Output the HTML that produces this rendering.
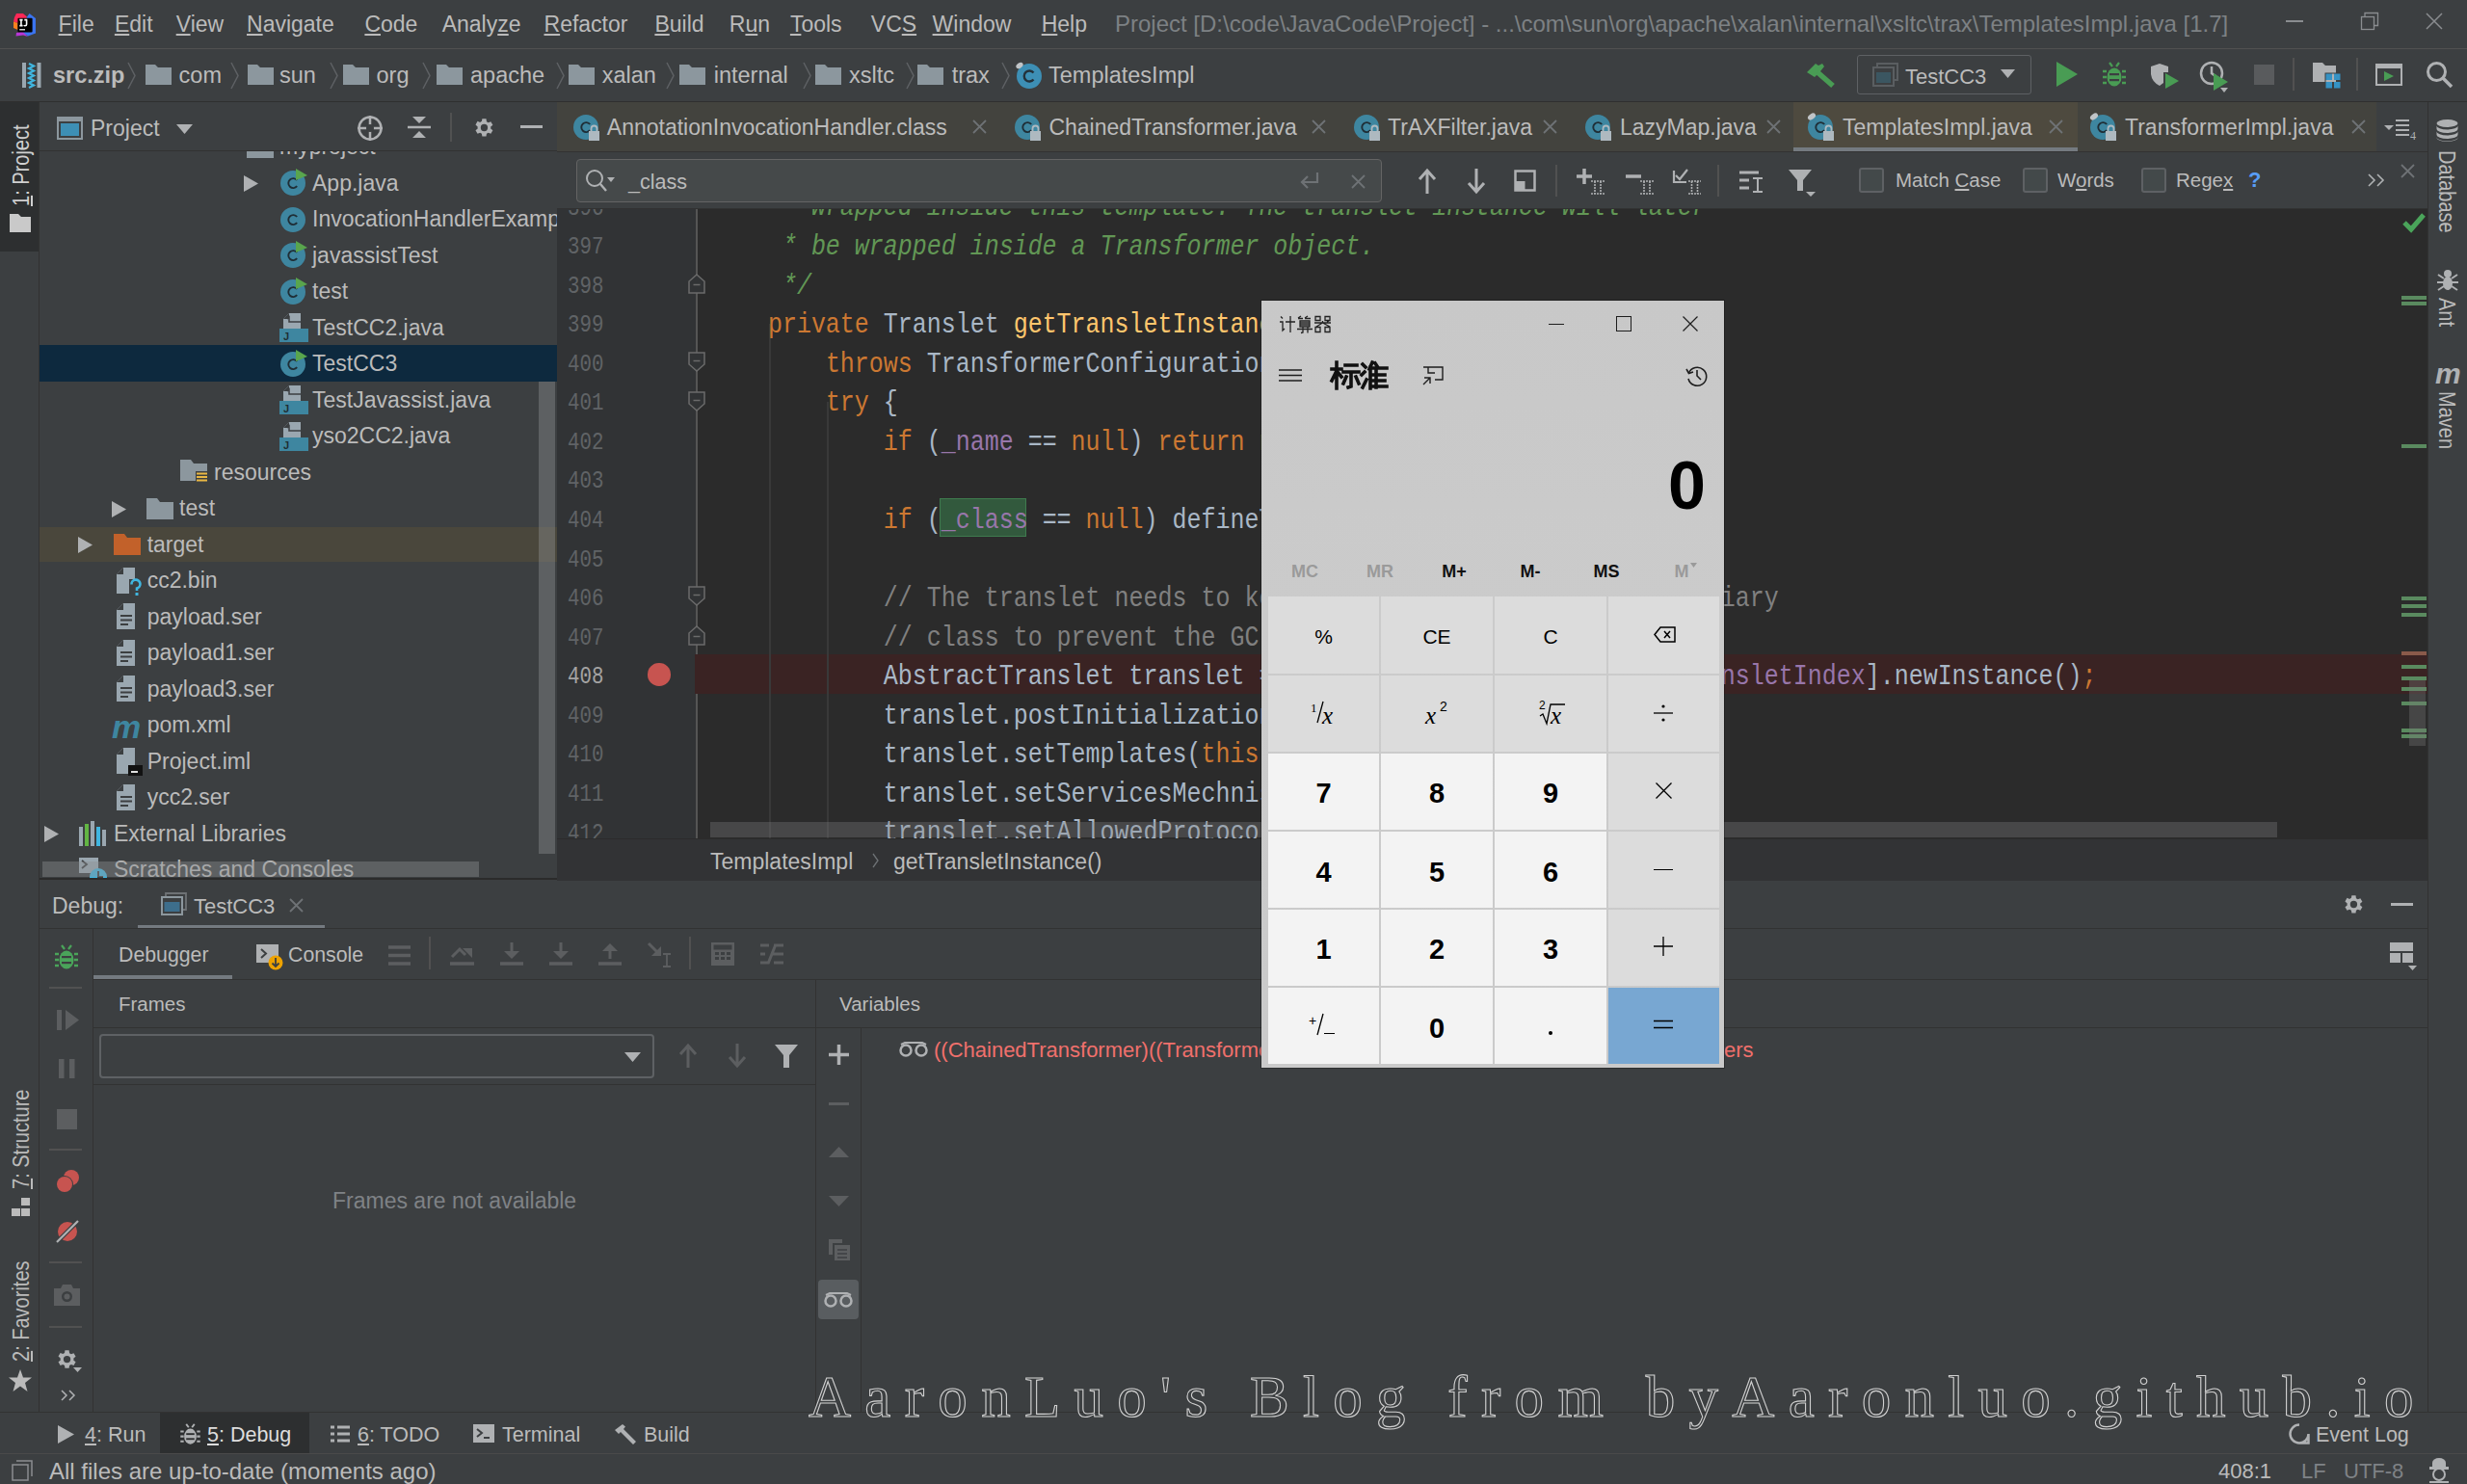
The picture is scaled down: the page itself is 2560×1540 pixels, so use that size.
<!DOCTYPE html>
<html><head><meta charset="utf-8">
<style>
*{margin:0;padding:0;box-sizing:border-box}
html,body{width:2560px;height:1540px;overflow:hidden;background:#3c3f41}
body{position:relative;font-family:"Liberation Sans",sans-serif;font-size:24px;color:#bbbbbb}
.a{position:absolute}
.t{position:absolute;white-space:pre;line-height:1}
.mono{font-family:"Liberation Mono",monospace}
svg{position:absolute;overflow:visible}
</style></head><body>

<!-- ===== MENU BAR ===== -->
<div class="a" style="left:0;top:0;width:2560px;height:50px;background:#3c3f41"></div>
<div class="a" style="left:0;top:50px;width:2560px;height:1px;background:#515151"></div>


<!-- IJ logo -->
<svg style="left:8px;top:8px" width="40" height="36" viewBox="0 0 40 36">
<polygon points="9,6 16,6 20,9.5 18,18 6,14.5 7,10" fill="#fe2857"/>
<polygon points="20,9.5 22.5,6 29,11 29,26.5 21,29.5 15.5,26" fill="#3b74f0"/>
<polygon points="6,14.5 10.5,16 10.5,23 6,21" fill="#fc801d"/>
<polygon points="9,26 15,24.5 21,30 16,28.5 8.5,29.5" fill="#b736d6"/>
<rect x="10.4" y="10.7" width="15.2" height="14.8" rx="1" fill="#000"/>
<path d="M12.3 12.6H15.6M13.95 12.6V18.6M12.3 18.6H15.6M17.3 12.6H20.3M19.6 12.6V17.2Q19.6 18.8 18 18.8Q17.2 18.8 16.8 18.1" stroke="#fff" stroke-width="1.6" fill="none"/>
<rect x="12.2" y="22" width="5.8" height="1.5" fill="#d0d0d0"/>
</svg>
<div class="t" style="left:60.6px;top:14.0px;color:#bbbbbb;font-size:23px"><u>F</u>ile</div>
<div class="t" style="left:118.9px;top:14.0px;color:#bbbbbb;font-size:23px"><u>E</u>dit</div>
<div class="t" style="left:182.7px;top:14.0px;color:#bbbbbb;font-size:23px"><u>V</u>iew</div>
<div class="t" style="left:256.0px;top:14.0px;color:#bbbbbb;font-size:23px"><u>N</u>avigate</div>
<div class="t" style="left:378.4px;top:14.0px;color:#bbbbbb;font-size:23px"><u>C</u>ode</div>
<div class="t" style="left:458.7px;top:14.0px;color:#bbbbbb;font-size:23px">Analy<u>z</u>e</div>
<div class="t" style="left:564.5px;top:14.0px;color:#bbbbbb;font-size:23px"><u>R</u>efactor</div>
<div class="t" style="left:679.4px;top:14.0px;color:#bbbbbb;font-size:23px"><u>B</u>uild</div>
<div class="t" style="left:756.8px;top:14.0px;color:#bbbbbb;font-size:23px">R<u>u</u>n</div>
<div class="t" style="left:819.9px;top:14.0px;color:#bbbbbb;font-size:23px"><u>T</u>ools</div>
<div class="t" style="left:903.8px;top:14.0px;color:#bbbbbb;font-size:23px">VC<u>S</u></div>
<div class="t" style="left:967.6px;top:14.0px;color:#bbbbbb;font-size:23px"><u>W</u>indow</div>
<div class="t" style="left:1080.7px;top:14.0px;color:#bbbbbb;font-size:23px"><u>H</u>elp</div>
<div class="t" style="left:1157px;top:13.2px;color:#7d8184;font-size:24px">Project [D:\code\JavaCode\Project] - ...\com\sun\org\apache\xalan\internal\xsltc\trax\TemplatesImpl.java [1.7]</div>
<div class="a" style="left:2372px;top:21px;width:18px;height:1.5px;background:#8a8d90"></div>
<svg style="left:2450px;top:13px" width="20" height="18"><rect x="0.5" y="4.5" width="13" height="13" fill="none" stroke="#8a8d90" stroke-width="1.3"/><path d="M4 4.5V0.5H17.5V13.5H13.5" fill="none" stroke="#8a8d90" stroke-width="1.3"/></svg>
<svg style="left:2517px;top:13px" width="18" height="18"><path d="M1 1L17 17M17 1L1 17" stroke="#8a8d90" stroke-width="1.5"/></svg>

<!-- ===== NAV BAR ===== -->
<div class="a" style="left:0;top:51px;width:2560px;height:54px;background:#3c3f41"></div>
<div class="a" style="left:0;top:105px;width:2560px;height:2px;background:#2f2f2f"></div>


<!-- zip icon -->
<svg style="left:23px;top:65px" width="20" height="26" viewBox="0 0 20 26">
<rect x="0" y="0" width="4" height="26" fill="#9aa7b0"/><rect x="15.5" y="0" width="4" height="26" fill="#9aa7b0"/>
<path d="M7 1L12 3.5L7 6L12 8.5L7 11L12 13.5L7 16L12 18.5L7 21L12 23.5L7 26" stroke="#40b6e0" stroke-width="2.2" fill="none"/>
</svg>
<div class="t" style="left:55px;top:67.4px;font-weight:bold;color:#bbbbbb;font-size:23.5px">src.zip</div>
<svg style="left:132px;top:64px" width="10" height="29"><path d="M1 1L8 14.5L1 28" stroke="#5e6164" stroke-width="1.5" fill="none"/></svg>
<svg style="left:150.7px;top:66.6px" width="27" height="21" viewBox="0 0 27 21"><path d="M0 0H10L13 3H27V21H0Z" fill="#8c979e"/></svg>
<div class="t" style="left:185.6px;top:67.4px;color:#bbbbbb;font-size:23.5px">com</div>
<svg style="left:239px;top:64px" width="10" height="29"><path d="M1 1L8 14.5L1 28" stroke="#5e6164" stroke-width="1.5" fill="none"/></svg>
<svg style="left:257px;top:66.6px" width="27" height="21" viewBox="0 0 27 21"><path d="M0 0H10L13 3H27V21H0Z" fill="#8c979e"/></svg>
<div class="t" style="left:290px;top:67.4px;color:#bbbbbb;font-size:23.5px">sun</div>
<svg style="left:342px;top:64px" width="10" height="29"><path d="M1 1L8 14.5L1 28" stroke="#5e6164" stroke-width="1.5" fill="none"/></svg>
<svg style="left:355.5px;top:66.6px" width="27" height="21" viewBox="0 0 27 21"><path d="M0 0H10L13 3H27V21H0Z" fill="#8c979e"/></svg>
<div class="t" style="left:390.5px;top:67.4px;color:#bbbbbb;font-size:23.5px">org</div>
<svg style="left:438px;top:64px" width="10" height="29"><path d="M1 1L8 14.5L1 28" stroke="#5e6164" stroke-width="1.5" fill="none"/></svg>
<svg style="left:453px;top:66.6px" width="27" height="21" viewBox="0 0 27 21"><path d="M0 0H10L13 3H27V21H0Z" fill="#8c979e"/></svg>
<div class="t" style="left:488px;top:67.4px;color:#bbbbbb;font-size:23.5px">apache</div>
<svg style="left:577px;top:64px" width="10" height="29"><path d="M1 1L8 14.5L1 28" stroke="#5e6164" stroke-width="1.5" fill="none"/></svg>
<svg style="left:590px;top:66.6px" width="27" height="21" viewBox="0 0 27 21"><path d="M0 0H10L13 3H27V21H0Z" fill="#8c979e"/></svg>
<div class="t" style="left:624.7px;top:67.4px;color:#bbbbbb;font-size:23.5px">xalan</div>
<svg style="left:691px;top:64px" width="10" height="29"><path d="M1 1L8 14.5L1 28" stroke="#5e6164" stroke-width="1.5" fill="none"/></svg>
<svg style="left:705px;top:66.6px" width="27" height="21" viewBox="0 0 27 21"><path d="M0 0H10L13 3H27V21H0Z" fill="#8c979e"/></svg>
<div class="t" style="left:740.7px;top:67.4px;color:#bbbbbb;font-size:23.5px">internal</div>
<svg style="left:833px;top:64px" width="10" height="29"><path d="M1 1L8 14.5L1 28" stroke="#5e6164" stroke-width="1.5" fill="none"/></svg>
<svg style="left:846px;top:66.6px" width="27" height="21" viewBox="0 0 27 21"><path d="M0 0H10L13 3H27V21H0Z" fill="#8c979e"/></svg>
<div class="t" style="left:881px;top:67.4px;color:#bbbbbb;font-size:23.5px">xsltc</div>
<svg style="left:940px;top:64px" width="10" height="29"><path d="M1 1L8 14.5L1 28" stroke="#5e6164" stroke-width="1.5" fill="none"/></svg>
<svg style="left:952px;top:66.6px" width="27" height="21" viewBox="0 0 27 21"><path d="M0 0H10L13 3H27V21H0Z" fill="#8c979e"/></svg>
<div class="t" style="left:987.7px;top:67.4px;color:#bbbbbb;font-size:23.5px">trax</div>
<svg style="left:1039px;top:64px" width="10" height="29"><path d="M1 1L8 14.5L1 28" stroke="#5e6164" stroke-width="1.5" fill="none"/></svg>
<svg style="left:1053px;top:64px" width="30" height="30" viewBox="0 0 30 30"><circle cx="15" cy="15" r="13" fill="#3d8fb5"/><path d="M19.5 11.5A5.5 5.5 0 1 0 19.5 18.5" stroke="#24323b" stroke-width="2.4" fill="none"/><ellipse cx="5" cy="4" rx="4" ry="2.6" fill="#c0c4c7" transform="rotate(-35 5 4)"/></svg>
<div class="t" style="left:1088px;top:67.4px;color:#bbbbbb;font-size:23.5px">TemplatesImpl</div>

<svg style="left:1875px;top:65px" width="29" height="27" viewBox="0 0 29 27"><path d="M0 10L9 1L12 3L16 1L18 4L14 9L8 15Z" fill="#499c54"/><path d="M11 10L27 24" stroke="#499c54" stroke-width="5.5"/></svg>
<div class="a" style="left:1927px;top:57px;width:181px;height:41px;border:1.5px solid #5e6164;border-radius:3px"></div>
<svg style="left:1943px;top:65px" width="27" height="25" viewBox="0 0 27 25"><path d="M5 4V1H26V18H22" fill="none" stroke="#5a5e61" stroke-width="2"/><rect x="1" y="5" width="21" height="19" fill="#3c3f41" stroke="#5a5e61" stroke-width="2"/><rect x="4" y="10" width="15" height="11" fill="#3b5661"/></svg>
<div class="t" style="left:1977px;top:68.9px;color:#bbbbbb;font-size:22px">TestCC3</div>
<svg style="left:2076px;top:72px" width="15" height="9"><path d="M0 0H15L7.5 9Z" fill="#afb1b3"/></svg>
<svg style="left:2134px;top:64px" width="22" height="26"><path d="M0 0L22 13L0 26Z" fill="#499c54"/></svg>
<svg style="left:2182px;top:64px" width="24" height="27" viewBox="0 0 24 27"><path d="M7 1L10 5M17 1L14 5" stroke="#499c54" stroke-width="2.2"/><ellipse cx="12" cy="16" rx="7.5" ry="9.5" fill="#499c54"/><path d="M0 10H4M20 10H24M0 16H4M20 16H24M0 22H4M20 22H24" stroke="#499c54" stroke-width="2.4"/><rect x="7" y="12" width="10" height="2.2" fill="#3c3f41"/><rect x="7" y="18" width="10" height="2.2" fill="#3c3f41"/></svg>
<svg style="left:2231px;top:66px" width="32" height="28" viewBox="0 0 32 28"><path d="M1 3L10 0L19 3V9H14V20L10 23Q2 19 1 11Z" fill="#afb1b3"/><path d="M16 10L30 18L16 26Z" fill="#499c54"/></svg>
<svg style="left:2282px;top:62px" width="30" height="34" viewBox="0 0 30 34"><circle cx="13" cy="14" r="11" fill="none" stroke="#afb1b3" stroke-width="2.5"/><path d="M13 7V14L17 17" stroke="#afb1b3" stroke-width="2.5" fill="none"/><path d="M15 14L30 23L15 32Z" fill="#499c54"/><path d="M22 29H30L26 34Z" fill="#afb1b3"/></svg>
<div class="a" style="left:2339px;top:67px;width:21px;height:21px;background:#595b5d"></div>
<div class="a" style="left:2379px;top:60px;width:2px;height:34px;background:#515151"></div>
<svg style="left:2400px;top:63px" width="30" height="30" viewBox="0 0 30 30"><path d="M0 2H10L13 5H24V22H0Z" fill="#afb1b3"/><rect x="13" y="13" width="7" height="7" fill="#3592c4"/><rect x="22" y="13" width="7" height="7" fill="#3592c4"/><rect x="13" y="22" width="7" height="7" fill="#3592c4"/><rect x="22" y="22" width="7" height="7" fill="#3592c4"/><rect x="13" y="13" width="16" height="16" fill="none" stroke="#3c3f41" stroke-width="1"/></svg>
<div class="a" style="left:2445px;top:60px;width:2px;height:34px;background:#515151"></div>
<svg style="left:2465px;top:66px" width="28" height="23" viewBox="0 0 28 23"><rect x="1" y="1" width="26" height="21" fill="none" stroke="#afb1b3" stroke-width="2"/><rect x="1" y="1" width="26" height="4" fill="#afb1b3"/><path d="M9 8L19 13L9 18Z" fill="#499c54"/></svg>
<svg style="left:2517px;top:63px" width="30" height="30" viewBox="0 0 30 30"><circle cx="11.5" cy="11.5" r="9" fill="none" stroke="#afb1b3" stroke-width="3"/><path d="M18 18L27 27" stroke="#afb1b3" stroke-width="3.5"/></svg>

<!-- ===== LEFT STRIP ===== -->
<div class="a" style="left:0;top:106px;width:41px;height:1359px;background:#3c3f41;border-right:1px solid #323232"></div>

<!-- ===== PROJECT PANEL ===== -->
<div class="a" style="left:41px;top:106px;width:537px;height:807px;background:#3c3f41"></div>


<!-- left strip active -->
<div class="a" style="left:0;top:106px;width:40px;height:155px;background:#2d2f30"></div>
<div class="t" style="left:11px;top:214px;transform:rotate(-90deg) scaleX(0.87);transform-origin:0 0;color:#d0d0d0;font-size:23px"><u>1</u>: Project</div>
<svg style="left:10px;top:222px" width="22" height="19" viewBox="0 0 22 19"><path d="M0 0H9L12 3H22V19H0Z" fill="#c9c9c9"/></svg>

<!-- project header -->
<svg style="left:59px;top:121px" width="27" height="24" viewBox="0 0 27 24"><rect x="1" y="1" width="25" height="22" fill="none" stroke="#8c979e" stroke-width="2"/><rect x="1" y="1" width="25" height="4" fill="#8c979e"/><rect x="4" y="7" width="19" height="13" fill="#3d8fb5"/></svg>
<div class="t" style="left:94px;top:122.0px;color:#bbbbbb;font-size:23px">Project</div>
<svg style="left:183px;top:129px" width="17" height="10"><path d="M0 0H17L8.5 10Z" fill="#afb1b3"/></svg>
<svg style="left:370px;top:119px" width="28" height="28" viewBox="0 0 28 28"><circle cx="14" cy="14" r="11.5" fill="none" stroke="#afb1b3" stroke-width="2.5"/><path d="M14 1V27M1 14H27" stroke="#afb1b3" stroke-width="2.5"/><circle cx="14" cy="14" r="4" fill="#3c3f41"/></svg>
<svg style="left:423px;top:120px" width="24" height="24" viewBox="0 0 24 24"><path d="M0 12H24" stroke="#afb1b3" stroke-width="2.5"/><path d="M5 1H19L12 8Z M5 23H19L12 16Z" fill="#afb1b3"/></svg>
<div class="a" style="left:467px;top:117px;width:1.5px;height:30px;background:#515151"></div>
<svg style="left:489px;top:120px" width="25" height="25" viewBox="0 0 24 24"><path fill="#afb1b3" d="M19.4 13a7.5 7.5 0 0 0 0-2l2.1-1.6-2-3.5-2.5 1a7.6 7.6 0 0 0-1.7-1L14.9 3h-4l-.4 2.6a7.6 7.6 0 0 0-1.7 1l-2.5-1-2 3.5L6.4 11a7.5 7.5 0 0 0 0 2l-2.1 1.6 2 3.5 2.5-1a7.6 7.6 0 0 0 1.7 1l.4 2.6h4l.4-2.6a7.6 7.6 0 0 0 1.7-1l2.5 1 2-3.5zM12.9 15.5a3.5 3.5 0 1 1 0-7 3.5 3.5 0 0 1 0 7z"/></svg>
<div class="a" style="left:540px;top:130px;width:23px;height:3px;background:#afb1b3"></div>
<div class="a" style="left:41px;top:156px;width:537px;height:1px;background:#323232"></div>
<div class="a" style="left:41px;top:157px;width:537px;height:756px;overflow:hidden">
<div class="a" style="left:-41px;top:-157px;width:600px;height:1000px">
<div class="a" style="left:41px;top:358px;width:537px;height:38px;background:#0d293e"></div>
<div class="a" style="left:41px;top:547px;width:537px;height:36px;background:#4a473c"></div>
<svg style="left:225px;top:146px" width="16" height="10"><path d="M0 0H16L8 9Z" fill="#afb1b3"/></svg>
<svg style="left:256px;top:141.8px" width="30" height="24" viewBox="0 0 30 24"><path d="M0 0H11L14 4H28V22H0Z" fill="#8c979e"/></svg>
<div class="t" style="left:290px;top:141.4px;color:#bbbbbb;font-size:23px">myproject</div>
<svg style="left:253px;top:182.3px" width="16" height="17"><path d="M0 0L15 8.5L0 17Z" fill="#afb1b3"/></svg>
<svg style="left:290px;top:175.3px" width="30" height="30" viewBox="0 0 30 30"><circle cx="14" cy="15" r="13" fill="#3e86a0"/><path d="M18.2 12A5 5 0 1 0 18.2 18.2" stroke="#1f2e36" stroke-width="1.9" fill="none"/><path d="M17 0L29 7L17 12Z" fill="#59a54d"/></svg>
<div class="t" style="left:324px;top:178.9px;color:#bbbbbb;font-size:23px">App.java</div>
<svg style="left:290px;top:212.8px" width="30" height="30" viewBox="0 0 30 30"><circle cx="14" cy="15" r="13" fill="#3e86a0"/><path d="M18.2 12A5 5 0 1 0 18.2 18.2" stroke="#1f2e36" stroke-width="1.9" fill="none"/></svg>
<div class="t" style="left:324px;top:216.4px;color:#bbbbbb;font-size:23px">InvocationHandlerExample</div>
<svg style="left:290px;top:250.3px" width="30" height="30" viewBox="0 0 30 30"><circle cx="14" cy="15" r="13" fill="#3e86a0"/><path d="M18.2 12A5 5 0 1 0 18.2 18.2" stroke="#1f2e36" stroke-width="1.9" fill="none"/><path d="M17 0L29 7L17 12Z" fill="#59a54d"/></svg>
<div class="t" style="left:324px;top:253.9px;color:#bbbbbb;font-size:23px">javassistTest</div>
<svg style="left:290px;top:287.8px" width="30" height="30" viewBox="0 0 30 30"><circle cx="14" cy="15" r="13" fill="#3e86a0"/><path d="M18.2 12A5 5 0 1 0 18.2 18.2" stroke="#1f2e36" stroke-width="1.9" fill="none"/><path d="M17 0L29 7L17 12Z" fill="#59a54d"/></svg>
<div class="t" style="left:324px;top:291.4px;color:#bbbbbb;font-size:23px">test</div>
<svg style="left:290px;top:325.3px" width="30" height="30" viewBox="0 0 30 30"><path d="M4 18V6L10 0H22V18Z" fill="#9aa7b0"/><path d="M4 6H10V0Z" fill="#3c3f41"/><path d="M8 6L10 4V9H22" stroke="#3c3f41" stroke-width="1.5" fill="none"/><rect x="0" y="16" width="30" height="14" fill="#3e86a0"/><text x="4" y="28" font-family="Liberation Sans" font-weight="bold" font-size="11" fill="#1f2e36">J</text></svg>
<div class="t" style="left:324px;top:328.9px;color:#bbbbbb;font-size:23px">TestCC2.java</div>
<svg style="left:290px;top:362.8px" width="30" height="30" viewBox="0 0 30 30"><circle cx="14" cy="15" r="13" fill="#3e86a0"/><path d="M18.2 12A5 5 0 1 0 18.2 18.2" stroke="#1f2e36" stroke-width="1.9" fill="none"/><path d="M17 0L29 7L17 12Z" fill="#59a54d"/></svg>
<div class="t" style="left:324px;top:366.4px;color:#bbbbbb;font-size:23px">TestCC3</div>
<svg style="left:290px;top:400.3px" width="30" height="30" viewBox="0 0 30 30"><path d="M4 18V6L10 0H22V18Z" fill="#9aa7b0"/><path d="M4 6H10V0Z" fill="#3c3f41"/><path d="M8 6L10 4V9H22" stroke="#3c3f41" stroke-width="1.5" fill="none"/><rect x="0" y="16" width="30" height="14" fill="#3e86a0"/><text x="4" y="28" font-family="Liberation Sans" font-weight="bold" font-size="11" fill="#1f2e36">J</text></svg>
<div class="t" style="left:324px;top:403.9px;color:#bbbbbb;font-size:23px">TestJavassist.java</div>
<svg style="left:290px;top:437.8px" width="30" height="30" viewBox="0 0 30 30"><path d="M4 18V6L10 0H22V18Z" fill="#9aa7b0"/><path d="M4 6H10V0Z" fill="#3c3f41"/><path d="M8 6L10 4V9H22" stroke="#3c3f41" stroke-width="1.5" fill="none"/><rect x="0" y="16" width="30" height="14" fill="#3e86a0"/><text x="4" y="28" font-family="Liberation Sans" font-weight="bold" font-size="11" fill="#1f2e36">J</text></svg>
<div class="t" style="left:324px;top:441.4px;color:#bbbbbb;font-size:23px">yso2CC2.java</div>
<svg style="left:187px;top:477.3px" width="30" height="24" viewBox="0 0 30 24"><path d="M0 0H11L14 4H28V22H0Z" fill="#8c979e"/><rect x="16" y="12" width="13" height="12" fill="#3c3f41"/><path d="M17 14.5H28M17 18H28M17 21.5H28" stroke="#e9b744" stroke-width="2"/></svg>
<div class="t" style="left:222px;top:478.9px;color:#bbbbbb;font-size:23px">resources</div>
<svg style="left:116px;top:519.8px" width="16" height="17"><path d="M0 0L15 8.5L0 17Z" fill="#afb1b3"/></svg>
<svg style="left:152px;top:516.8px" width="30" height="24" viewBox="0 0 30 24"><path d="M0 0H11L14 4H28V22H0Z" fill="#8c979e"/></svg>
<div class="t" style="left:186px;top:516.4px;color:#bbbbbb;font-size:23px">test</div>
<svg style="left:81px;top:557.3px" width="16" height="17"><path d="M0 0L15 8.5L0 17Z" fill="#afb1b3"/></svg>
<svg style="left:118px;top:554.3px" width="30" height="24" viewBox="0 0 30 24"><path d="M0 0H11L14 4H28V22H0Z" fill="#c2612a"/></svg>
<div class="t" style="left:152.7px;top:553.9px;color:#bbbbbb;font-size:23px">target</div>
<svg style="left:119px;top:587.8px" width="30" height="30" viewBox="0 0 30 30"><path d="M2 28V8L9 1H21V28Z" fill="#9aa7b0"/><path d="M2 8H9V1Z" fill="#3c3f41"/><rect x="15" y="13" width="14" height="17" fill="#3c3f41"/><path d="M17.5 18.5A4.5 4.5 0 1 1 23 22.5V25" stroke="#40b6e0" stroke-width="2.6" fill="none"/><rect x="21.5" y="27" width="3" height="3" fill="#40b6e0"/></svg>
<div class="t" style="left:152.7px;top:591.4px;color:#bbbbbb;font-size:23px">cc2.bin</div>
<svg style="left:119px;top:625.3px" width="30" height="30" viewBox="0 0 30 30"><path d="M2 28V8L9 1H21V28Z" fill="#9aa7b0"/><path d="M2 8H9V1Z" fill="#3c3f41"/><path d="M6 14H18M6 18.5H18M6 23H14" stroke="#3c3f41" stroke-width="1.8"/></svg>
<div class="t" style="left:152.7px;top:628.9px;color:#bbbbbb;font-size:23px">payload.ser</div>
<svg style="left:119px;top:662.8px" width="30" height="30" viewBox="0 0 30 30"><path d="M2 28V8L9 1H21V28Z" fill="#9aa7b0"/><path d="M2 8H9V1Z" fill="#3c3f41"/><path d="M6 14H18M6 18.5H18M6 23H14" stroke="#3c3f41" stroke-width="1.8"/></svg>
<div class="t" style="left:152.7px;top:666.4px;color:#bbbbbb;font-size:23px">payload1.ser</div>
<svg style="left:119px;top:700.3px" width="30" height="30" viewBox="0 0 30 30"><path d="M2 28V8L9 1H21V28Z" fill="#9aa7b0"/><path d="M2 8H9V1Z" fill="#3c3f41"/><path d="M6 14H18M6 18.5H18M6 23H14" stroke="#3c3f41" stroke-width="1.8"/></svg>
<div class="t" style="left:152.7px;top:703.9px;color:#bbbbbb;font-size:23px">payload3.ser</div>
<div class="t" style="left:116px;top:736.8px;color:#3e86a0;font-weight:bold;font-style:italic;font-size:34px;font-family:'Liberation Sans';letter-spacing:-1px">m</div>
<div class="t" style="left:152.7px;top:741.4px;color:#bbbbbb;font-size:23px">pom.xml</div>
<svg style="left:119px;top:775.3px" width="30" height="30" viewBox="0 0 30 30"><path d="M2 28V8L9 1H21V28Z" fill="#9aa7b0"/><path d="M2 8H9V1Z" fill="#3c3f41"/><rect x="14" y="19" width="15" height="11" fill="#121212"/><rect x="17" y="25" width="7" height="2" fill="#e0e0e0"/></svg>
<div class="t" style="left:152.7px;top:778.9px;color:#bbbbbb;font-size:23px">Project.iml</div>
<svg style="left:119px;top:812.8px" width="30" height="30" viewBox="0 0 30 30"><path d="M2 28V8L9 1H21V28Z" fill="#9aa7b0"/><path d="M2 8H9V1Z" fill="#3c3f41"/><path d="M6 14H18M6 18.5H18M6 23H14" stroke="#3c3f41" stroke-width="1.8"/></svg>
<div class="t" style="left:152.7px;top:816.4px;color:#bbbbbb;font-size:23px">ycc2.ser</div>
<svg style="left:46px;top:857.3px" width="16" height="17"><path d="M0 0L15 8.5L0 17Z" fill="#afb1b3"/></svg>
<svg style="left:82px;top:852.3px" width="28" height="26" viewBox="0 0 28 26"><rect x="0" y="6" width="4" height="20" fill="#9aa7b0"/><rect x="6" y="3" width="4" height="23" fill="#62b543"/><rect x="12" y="0" width="4" height="26" fill="#9aa7b0"/><rect x="18" y="6" width="4" height="20" fill="#40b6e0"/><rect x="24" y="9" width="4" height="17" fill="#9aa7b0"/></svg>
<div class="t" style="left:118px;top:853.9px;color:#bbbbbb;font-size:23px">External Libraries</div>
<svg style="left:82px;top:889.8px" width="30" height="30" viewBox="0 0 30 30"><rect x="0" y="0" width="20" height="16" fill="#9aa7b0"/><path d="M3 3L8 7L3 11" stroke="#3c3f41" stroke-width="1.8" fill="none"/><circle cx="20" cy="20" r="9" fill="#40b6e0"/><path d="M20 14V20H25" stroke="#3c3f41" stroke-width="2" fill="none"/></svg>
<div class="t" style="left:118px;top:891.4px;color:#bbbbbb;font-size:23px">Scratches and Consoles</div>
</div></div>
<div class="a" style="left:559px;top:396px;width:17px;height:490px;background:rgba(140,142,145,.42)"></div>
<div class="a" style="left:44px;top:894px;width:453px;height:16px;background:rgba(140,142,145,.42)"></div>

<!-- ===== EDITOR ===== -->
<div class="a" style="left:578px;top:106px;width:1941px;height:807px;background:#2b2b2b"></div>


<!-- tab bar -->
<div class="a" style="left:578px;top:106px;width:1888px;height:51px;background:#43433e"></div>
<div class="a" style="left:1861px;top:106px;width:295px;height:51px;background:#4e4a3f"></div>
<div class="a" style="left:2466px;top:106px;width:53px;height:51px;background:#3c3f41"></div>
<div class="a" style="left:1861px;top:153px;width:295px;height:4px;background:#747a80"></div>
<div class="a" style="left:578px;top:157px;width:1941px;height:1px;background:#323232"></div>
<svg style="left:593.7px;top:117px" width="30" height="30" viewBox="0 0 30 30"><circle cx="14" cy="15" r="13" fill="#3e86a0"/><path d="M18.2 12A5 5 0 1 0 18.2 18.2" stroke="#1f2e36" stroke-width="1.9" fill="none"/><rect x="17" y="19" width="11" height="10" fill="#aeb9c0"/><path d="M19.5 20V16.5A3 3 0 0 1 25.5 16.5V20" stroke="#aeb9c0" stroke-width="1.8" fill="none"/></svg>
<div class="t" style="left:629.8px;top:121.2px;color:#bbbbbb;font-size:23px">AnnotationInvocationHandler.class</div>
<svg style="left:1008.7px;top:124px" width="15" height="15"><path d="M1 1L14 14M14 1L1 14" stroke="#6e7275" stroke-width="1.8"/></svg>
<svg style="left:1051.7px;top:117px" width="30" height="30" viewBox="0 0 30 30"><circle cx="14" cy="15" r="13" fill="#3e86a0"/><path d="M18.2 12A5 5 0 1 0 18.2 18.2" stroke="#1f2e36" stroke-width="1.9" fill="none"/><rect x="17" y="19" width="11" height="10" fill="#aeb9c0"/><path d="M19.5 20V16.5A3 3 0 0 1 25.5 16.5V20" stroke="#aeb9c0" stroke-width="1.8" fill="none"/></svg>
<div class="t" style="left:1088.4px;top:121.2px;color:#bbbbbb;font-size:23px">ChainedTransformer.java</div>
<svg style="left:1361px;top:124px" width="15" height="15"><path d="M1 1L14 14M14 1L1 14" stroke="#6e7275" stroke-width="1.8"/></svg>
<svg style="left:1404px;top:117px" width="30" height="30" viewBox="0 0 30 30"><circle cx="14" cy="15" r="13" fill="#3e86a0"/><path d="M18.2 12A5 5 0 1 0 18.2 18.2" stroke="#1f2e36" stroke-width="1.9" fill="none"/><rect x="17" y="19" width="11" height="10" fill="#aeb9c0"/><path d="M19.5 20V16.5A3 3 0 0 1 25.5 16.5V20" stroke="#aeb9c0" stroke-width="1.8" fill="none"/></svg>
<div class="t" style="left:1440px;top:121.2px;color:#bbbbbb;font-size:23px">TrAXFilter.java</div>
<svg style="left:1600.7px;top:124px" width="15" height="15"><path d="M1 1L14 14M14 1L1 14" stroke="#6e7275" stroke-width="1.8"/></svg>
<svg style="left:1644px;top:117px" width="30" height="30" viewBox="0 0 30 30"><circle cx="14" cy="15" r="13" fill="#3e86a0"/><path d="M18.2 12A5 5 0 1 0 18.2 18.2" stroke="#1f2e36" stroke-width="1.9" fill="none"/><rect x="17" y="19" width="11" height="10" fill="#aeb9c0"/><path d="M19.5 20V16.5A3 3 0 0 1 25.5 16.5V20" stroke="#aeb9c0" stroke-width="1.8" fill="none"/></svg>
<div class="t" style="left:1681px;top:121.2px;color:#bbbbbb;font-size:23px">LazyMap.java</div>
<svg style="left:1833px;top:124px" width="15" height="15"><path d="M1 1L14 14M14 1L1 14" stroke="#6e7275" stroke-width="1.8"/></svg>
<svg style="left:1875px;top:117px" width="30" height="30" viewBox="0 0 30 30"><circle cx="14" cy="15" r="13" fill="#3e86a0"/><path d="M18.2 12A5 5 0 1 0 18.2 18.2" stroke="#1f2e36" stroke-width="1.9" fill="none"/><rect x="17" y="19" width="11" height="10" fill="#aeb9c0"/><path d="M19.5 20V16.5A3 3 0 0 1 25.5 16.5V20" stroke="#aeb9c0" stroke-width="1.8" fill="none"/><ellipse cx="5" cy="4" rx="4.5" ry="2.8" fill="#c0c4c7" transform="rotate(-35 5 4)"/></svg>
<div class="t" style="left:1912px;top:121.2px;color:#bbbbbb;font-size:23px">TemplatesImpl.java</div>
<svg style="left:2126px;top:124px" width="15" height="15"><path d="M1 1L14 14M14 1L1 14" stroke="#6e7275" stroke-width="1.8"/></svg>
<svg style="left:2168px;top:117px" width="30" height="30" viewBox="0 0 30 30"><circle cx="14" cy="15" r="13" fill="#3e86a0"/><path d="M18.2 12A5 5 0 1 0 18.2 18.2" stroke="#1f2e36" stroke-width="1.9" fill="none"/><rect x="17" y="19" width="11" height="10" fill="#aeb9c0"/><path d="M19.5 20V16.5A3 3 0 0 1 25.5 16.5V20" stroke="#aeb9c0" stroke-width="1.8" fill="none"/><ellipse cx="5" cy="4" rx="4.5" ry="2.8" fill="#c0c4c7" transform="rotate(-35 5 4)"/></svg>
<div class="t" style="left:2205px;top:121.2px;color:#bbbbbb;font-size:23px">TransformerImpl.java</div>
<svg style="left:2440px;top:124px" width="15" height="15"><path d="M1 1L14 14M14 1L1 14" stroke="#6e7275" stroke-width="1.8"/></svg>
<svg style="left:2474px;top:122px" width="34" height="24" viewBox="0 0 34 24"><path d="M0 8H10L5 13Z" fill="#afb1b3"/><path d="M12 3H26M12 8H26M12 13H26M12 18H26" stroke="#afb1b3" stroke-width="2"/><text x="27" y="23" font-family="Liberation Serif" font-size="12" fill="#afb1b3">4</text></svg>
<!-- search toolbar -->
<div class="a" style="left:578px;top:158px;width:1941px;height:59px;background:#3c3f41"></div>
<div class="a" style="left:578px;top:216px;width:1941px;height:1px;background:#323232"></div>
<div class="a" style="left:598px;top:165px;width:836px;height:45px;border:1.5px solid #646464;border-radius:4px;background:#45494a"></div>
<svg style="left:607px;top:175px" width="32" height="26" viewBox="0 0 32 26"><circle cx="10" cy="10" r="8" fill="none" stroke="#afb1b3" stroke-width="2"/><path d="M16 16L22 23" stroke="#afb1b3" stroke-width="2.4"/><path d="M23 9H31L27 14Z" fill="#afb1b3"/></svg>
<div class="t" style="left:652px;top:178.8px;color:#bbbbbb;font-size:21.5px">_class</div>
<svg style="left:1347px;top:177px" width="26" height="24" viewBox="0 0 26 24"><path d="M20 2V12H5" stroke="#6e7275" stroke-width="2.2" fill="none"/><path d="M10 6L4 12L10 18" stroke="#6e7275" stroke-width="2.2" fill="none"/></svg>
<svg style="left:1402px;top:181px" width="15" height="15"><path d="M1 1L14 14M14 1L1 14" stroke="#6e7275" stroke-width="1.8"/></svg>

<svg style="left:1471px;top:175px" width="20" height="26" viewBox="0 0 20 26"><path d="M10 3V26M2 11L10 2L18 11" stroke="#afb1b3" stroke-width="3" fill="none"/></svg>
<svg style="left:1522px;top:175px" width="20" height="26" viewBox="0 0 20 26"><path d="M10 0V23M2 15L10 24L18 15" stroke="#afb1b3" stroke-width="3" fill="none"/></svg>
<svg style="left:1571px;top:176px" width="23" height="23" viewBox="0 0 23 23"><rect x="1.5" y="1.5" width="20" height="20" fill="none" stroke="#afb1b3" stroke-width="2.5"/><rect x="1.5" y="12" width="10" height="9.5" fill="#afb1b3"/></svg>
<div class="a" style="left:1614px;top:171px;width:1.5px;height:33px;background:#515151"></div>
<svg style="left:1636px;top:174px" width="30" height="30" viewBox="0 0 30 30"><path d="M8 1V17M0 9H16" stroke="#afb1b3" stroke-width="3.5"/><path d="M15 14H29M15 27H29M19 14V27M25 14V27" stroke="#afb1b3" stroke-width="1.6" stroke-dasharray="2 1"/></svg>
<svg style="left:1687px;top:174px" width="30" height="30" viewBox="0 0 30 30"><path d="M0 9H16" stroke="#afb1b3" stroke-width="3.5"/><path d="M15 14H29M15 27H29M19 14V27M25 14V27" stroke="#afb1b3" stroke-width="1.6" stroke-dasharray="2 1"/></svg>
<svg style="left:1736px;top:174px" width="30" height="30" viewBox="0 0 30 30"><path d="M1 3V15H14M3 8L7 12L15 2" stroke="#afb1b3" stroke-width="2.2" fill="none"/><path d="M16 14H29M16 27H29M19.5 14V27M25.5 14V27" stroke="#afb1b3" stroke-width="1.6" stroke-dasharray="2 1"/></svg>
<div class="a" style="left:1782px;top:171px;width:1.5px;height:33px;background:#515151"></div>
<svg style="left:1805px;top:177px" width="26" height="24" viewBox="0 0 26 24"><path d="M0 2H20M0 10H10M0 18H10" stroke="#afb1b3" stroke-width="3"/><path d="M14 8H24M14 22H24M19 8V22" stroke="#afb1b3" stroke-width="2"/></svg>
<svg style="left:1856px;top:176px" width="30" height="30" viewBox="0 0 30 30"><path d="M0 0H24L15 11V22H9V11Z" fill="#afb1b3"/><path d="M18 23H28L23 28Z" fill="#afb1b3"/></svg>
<div class="a" style="left:1929px;top:174px;width:26px;height:26px;border:2px solid #5e6164;border-radius:3px;background:#43494a"></div>
<div class="t" style="left:1967px;top:176.8px;color:#bbbbbb;font-size:20.5px">Match <u>C</u>ase</div>
<div class="a" style="left:2099px;top:174px;width:26px;height:26px;border:2px solid #5e6164;border-radius:3px;background:#43494a"></div>
<div class="t" style="left:2135px;top:176.8px;color:#bbbbbb;font-size:20.5px">W<u>o</u>rds</div>
<div class="a" style="left:2222px;top:174px;width:26px;height:26px;border:2px solid #5e6164;border-radius:3px;background:#43494a"></div>
<div class="t" style="left:2258px;top:176.8px;color:#bbbbbb;font-size:20.5px">Rege<u>x</u></div>
<div class="t" style="left:2333px;top:175.9px;color:#589df6;font-weight:bold;font-size:22px">?</div>
<svg style="left:2457px;top:180px" width="18" height="14"><path d="M1 1L7 7L1 13M10 1L16 7L10 13" stroke="#afb1b3" stroke-width="1.6" fill="none"/></svg>
<svg style="left:2491px;top:170px" width="15" height="15"><path d="M1 1L14 14M14 1L1 14" stroke="#6e7275" stroke-width="1.8"/></svg>

<!-- gutter -->
<div class="a" style="left:578px;top:217px;width:144px;height:655px;background:#313335"></div>
<div class="a" style="left:722px;top:217px;width:1.5px;height:655px;background:#555555"></div>
<div class="a" style="left:798px;top:679px;width:2px;height:0;"></div>
<div class="a" style="left:721px;top:679px;width:1798px;height:41px;background:#3a2323"></div>
<div class="a" style="left:798px;top:336px;width:1.5px;height:536px;background:#393939"></div>
<div class="a" style="left:858px;top:417px;width:1.5px;height:455px;background:#393939"></div>
<div class="a" style="left:975px;top:517px;width:90px;height:40px;background:#32593d;border:1.5px solid #3e7b4e"></div>
<div class="a" style="left:672px;top:688px;width:23.5px;height:23.5px;border-radius:50%;background:#c75450"></div>
<div class="a" style="left:578px;top:217px;width:144px;height:655px;overflow:hidden">
<div class="t mono" style="left:2px;top:-10.5px;width:46.5px;text-align:right;font-size:20.8px;color:#606366;transform:scaleY(1.22);transform-origin:0 8.5px">396</div>
<div class="t mono" style="left:2px;top:30.1px;width:46.5px;text-align:right;font-size:20.8px;color:#606366;transform:scaleY(1.22);transform-origin:0 8.5px">397</div>
<div class="t mono" style="left:2px;top:70.6px;width:46.5px;text-align:right;font-size:20.8px;color:#606366;transform:scaleY(1.22);transform-origin:0 8.5px">398</div>
<div class="t mono" style="left:2px;top:111.2px;width:46.5px;text-align:right;font-size:20.8px;color:#606366;transform:scaleY(1.22);transform-origin:0 8.5px">399</div>
<div class="t mono" style="left:2px;top:151.8px;width:46.5px;text-align:right;font-size:20.8px;color:#606366;transform:scaleY(1.22);transform-origin:0 8.5px">400</div>
<div class="t mono" style="left:2px;top:192.3px;width:46.5px;text-align:right;font-size:20.8px;color:#606366;transform:scaleY(1.22);transform-origin:0 8.5px">401</div>
<div class="t mono" style="left:2px;top:232.9px;width:46.5px;text-align:right;font-size:20.8px;color:#606366;transform:scaleY(1.22);transform-origin:0 8.5px">402</div>
<div class="t mono" style="left:2px;top:273.4px;width:46.5px;text-align:right;font-size:20.8px;color:#606366;transform:scaleY(1.22);transform-origin:0 8.5px">403</div>
<div class="t mono" style="left:2px;top:314.0px;width:46.5px;text-align:right;font-size:20.8px;color:#606366;transform:scaleY(1.22);transform-origin:0 8.5px">404</div>
<div class="t mono" style="left:2px;top:354.6px;width:46.5px;text-align:right;font-size:20.8px;color:#606366;transform:scaleY(1.22);transform-origin:0 8.5px">405</div>
<div class="t mono" style="left:2px;top:395.1px;width:46.5px;text-align:right;font-size:20.8px;color:#606366;transform:scaleY(1.22);transform-origin:0 8.5px">406</div>
<div class="t mono" style="left:2px;top:435.7px;width:46.5px;text-align:right;font-size:20.8px;color:#606366;transform:scaleY(1.22);transform-origin:0 8.5px">407</div>
<div class="t mono" style="left:2px;top:476.2px;width:46.5px;text-align:right;font-size:20.8px;color:#a4a3a3;transform:scaleY(1.22);transform-origin:0 8.5px">408</div>
<div class="t mono" style="left:2px;top:516.8px;width:46.5px;text-align:right;font-size:20.8px;color:#606366;transform:scaleY(1.22);transform-origin:0 8.5px">409</div>
<div class="t mono" style="left:2px;top:557.4px;width:46.5px;text-align:right;font-size:20.8px;color:#606366;transform:scaleY(1.22);transform-origin:0 8.5px">410</div>
<div class="t mono" style="left:2px;top:597.9px;width:46.5px;text-align:right;font-size:20.8px;color:#606366;transform:scaleY(1.22);transform-origin:0 8.5px">411</div>
<div class="t mono" style="left:2px;top:638.5px;width:46.5px;text-align:right;font-size:20.8px;color:#606366;transform:scaleY(1.22);transform-origin:0 8.5px">412</div>
</div>
<svg style="left:714px;top:283.9px" width="18" height="21"><path d="M1 20V8L9 1L17 8V20Z" fill="#313335" stroke="#6b6b6b" stroke-width="1.5"/><path d="M5.5 11.5H12.5" stroke="#6b6b6b" stroke-width="1.5"/></svg>
<svg style="left:714px;top:365.0px" width="18" height="21"><path d="M1 1H17V13L9 20L1 13Z" fill="#313335" stroke="#6b6b6b" stroke-width="1.5"/><path d="M5.5 9.5H12.5" stroke="#6b6b6b" stroke-width="1.5"/></svg>
<svg style="left:714px;top:405.6px" width="18" height="21"><path d="M1 1H17V13L9 20L1 13Z" fill="#313335" stroke="#6b6b6b" stroke-width="1.5"/><path d="M5.5 9.5H12.5" stroke="#6b6b6b" stroke-width="1.5"/></svg>
<svg style="left:714px;top:608.4px" width="18" height="21"><path d="M1 1H17V13L9 20L1 13Z" fill="#313335" stroke="#6b6b6b" stroke-width="1.5"/><path d="M5.5 9.5H12.5" stroke="#6b6b6b" stroke-width="1.5"/></svg>
<svg style="left:714px;top:648.9px" width="18" height="21"><path d="M1 20V8L9 1L17 8V20Z" fill="#313335" stroke="#6b6b6b" stroke-width="1.5"/><path d="M5.5 11.5H12.5" stroke="#6b6b6b" stroke-width="1.5"/></svg>
<div class="a" style="left:723px;top:217px;width:1796px;height:655px;overflow:hidden"><div class="a" style="left:-723px;top:-217px;width:2600px;height:1000px">
<div class="t mono" style="left:737px;top:203.4px;font-size:24.98px;transform:scaleY(1.15);transform-origin:0 10.87px"><span style="color:#629755;font-style:italic">     * wrapped inside this template. The translet instance will later</span></div>
<div class="t mono" style="left:737px;top:243.9px;font-size:24.98px;transform:scaleY(1.15);transform-origin:0 10.87px"><span style="color:#629755;font-style:italic">     * be wrapped inside a Transformer object.</span></div>
<div class="t mono" style="left:737px;top:284.5px;font-size:24.98px;transform:scaleY(1.15);transform-origin:0 10.87px"><span style="color:#629755;font-style:italic">     */</span></div>
<div class="t mono" style="left:737px;top:325.1px;font-size:24.98px;transform:scaleY(1.15);transform-origin:0 10.87px"><span style="color:#a9b7c6">    </span><span style="color:#cc7832">private </span><span style="color:#a9b7c6">Translet </span><span style="color:#ffc66d">getTransletInstance</span><span style="color:#a9b7c6">()</span></div>
<div class="t mono" style="left:737px;top:365.6px;font-size:24.98px;transform:scaleY(1.15);transform-origin:0 10.87px"><span style="color:#a9b7c6">        </span><span style="color:#cc7832">throws </span><span style="color:#a9b7c6">TransformerConfigurationException {</span></div>
<div class="t mono" style="left:737px;top:406.2px;font-size:24.98px;transform:scaleY(1.15);transform-origin:0 10.87px"><span style="color:#a9b7c6">        </span><span style="color:#cc7832">try </span><span style="color:#a9b7c6">{</span></div>
<div class="t mono" style="left:737px;top:446.7px;font-size:24.98px;transform:scaleY(1.15);transform-origin:0 10.87px"><span style="color:#a9b7c6">            </span><span style="color:#cc7832">if </span><span style="color:#a9b7c6">(</span><span style="color:#9876aa">_name</span><span style="color:#a9b7c6"> == </span><span style="color:#cc7832">null</span><span style="color:#a9b7c6">) </span><span style="color:#cc7832">return null</span><span style="color:#cc7832">;</span></div>
<div class="t mono" style="left:737px;top:527.9px;font-size:24.98px;transform:scaleY(1.15);transform-origin:0 10.87px"><span style="color:#a9b7c6">            </span><span style="color:#cc7832">if </span><span style="color:#a9b7c6">(</span><span style="color:#9876aa">_class</span><span style="color:#a9b7c6"> == </span><span style="color:#cc7832">null</span><span style="color:#a9b7c6">) defineTransletClasses()</span><span style="color:#cc7832">;</span></div>
<div class="t mono" style="left:737px;top:609.0px;font-size:24.98px;transform:scaleY(1.15);transform-origin:0 10.87px"><span style="color:#808080">            // The translet needs to keep a reference to all its auxiliary</span></div>
<div class="t mono" style="left:737px;top:649.5px;font-size:24.98px;transform:scaleY(1.15);transform-origin:0 10.87px"><span style="color:#808080">            // class to prevent the GC from collecting them</span></div>
<div class="t mono" style="left:737px;top:690.1px;font-size:24.98px;transform:scaleY(1.15);transform-origin:0 10.87px"><span style="color:#a9b7c6">            AbstractTranslet translet = (AbstractTranslet) </span><span style="color:#9876aa">_class</span><span style="color:#a9b7c6">[</span><span style="color:#9876aa">_transletIndex</span><span style="color:#a9b7c6">].newInstance()</span><span style="color:#cc7832">;</span></div>
<div class="t mono" style="left:737px;top:730.7px;font-size:24.98px;transform:scaleY(1.15);transform-origin:0 10.87px"><span style="color:#a9b7c6">            translet.postInitialization()</span><span style="color:#cc7832">;</span></div>
<div class="t mono" style="left:737px;top:771.2px;font-size:24.98px;transform:scaleY(1.15);transform-origin:0 10.87px"><span style="color:#a9b7c6">            translet.setTemplates(</span><span style="color:#cc7832">this</span><span style="color:#a9b7c6">)</span><span style="color:#cc7832">;</span></div>
<div class="t mono" style="left:737px;top:811.8px;font-size:24.98px;transform:scaleY(1.15);transform-origin:0 10.87px"><span style="color:#a9b7c6">            translet.setServicesMechnism(</span><span style="color:#9876aa">_useServicesMechanism</span><span style="color:#a9b7c6">)</span><span style="color:#cc7832">;</span></div>
<div class="t mono" style="left:737px;top:852.3px;font-size:24.98px;transform:scaleY(1.15);transform-origin:0 10.87px"><span style="color:#a9b7c6">            translet.setAllowedProtocols(</span><span style="color:#9876aa">_accessExternalStylesheet</span><span style="color:#a9b7c6">)</span><span style="color:#cc7832">;</span></div>
</div></div>
<div class="a" style="left:737px;top:853px;width:1626px;height:16px;background:rgba(130,132,135,.32)"></div>
<svg style="left:2493px;top:221px" width="24" height="20" viewBox="0 0 24 20"><path d="M2 10L9 17L22 2" stroke="#4aa45a" stroke-width="5" fill="none"/></svg>
<div class="a" style="left:2492px;top:307px;width:26px;height:4px;background:#5a8a5f"></div>
<div class="a" style="left:2492px;top:313px;width:26px;height:4px;background:#5a8a5f"></div>
<div class="a" style="left:2492px;top:461px;width:26px;height:4px;background:#5a8a5f"></div>
<div class="a" style="left:2492px;top:619px;width:26px;height:4px;background:#5a8a5f"></div>
<div class="a" style="left:2492px;top:627px;width:26px;height:4px;background:#5a8a5f"></div>
<div class="a" style="left:2492px;top:636px;width:26px;height:4px;background:#5a8a5f"></div>
<div class="a" style="left:2492px;top:676px;width:26px;height:4px;background:#8a5a4a"></div>
<div class="a" style="left:2492px;top:690px;width:26px;height:4px;background:#5a8a5f"></div>
<div class="a" style="left:2492px;top:702px;width:26px;height:4px;background:#5a8a5f"></div>
<div class="a" style="left:2492px;top:713px;width:26px;height:4px;background:#5a8a5f"></div>
<div class="a" style="left:2492px;top:728px;width:26px;height:4px;background:#5a8a5f"></div>
<div class="a" style="left:2492px;top:756px;width:26px;height:4px;background:#5a8a5f"></div>
<div class="a" style="left:2492px;top:762px;width:26px;height:4px;background:#5a8a5f"></div>
<div class="a" style="left:2500px;top:706px;width:17px;height:68px;background:rgba(120,120,120,.35)"></div>
<div class="a" style="left:578px;top:870px;width:1941px;height:44px;background:#323335;border-top:1.5px solid #2b2b2b"></div>
<div class="t" style="left:737px;top:882.5px;color:#bbbbbb;font-size:23px">TemplatesImpl</div>
<svg style="left:905px;top:885px" width="8" height="16"><path d="M1 1L6 8L1 15" stroke="#6e7275" stroke-width="1.3" fill="none"/></svg>
<div class="t" style="left:927px;top:882.5px;color:#bbbbbb;font-size:23px">getTransletInstance()</div>

<!-- ===== RIGHT STRIP ===== -->
<div class="a" style="left:2519px;top:106px;width:41px;height:1359px;background:#3c3f41;border-left:1px solid #323232"></div>


<!-- right strip content -->
<svg style="left:2528px;top:124px" width="23" height="23" viewBox="0 0 23 23"><ellipse cx="11.5" cy="4" rx="11" ry="4" fill="#afb1b3"/><path d="M0.5 6.5A11 4 0 0 0 22.5 6.5V10A11 4 0 0 1 0.5 10Z M0.5 12.5A11 4 0 0 0 22.5 12.5V16A11 4 0 0 1 0.5 16Z M0.5 18.5A11 4 0 0 0 22.5 18.5V19A11 4 0 0 1 0.5 19Z" fill="#afb1b3"/></svg>
<div class="t" style="left:2550px;top:156px;transform:rotate(90deg) scaleX(0.87);transform-origin:0 0;color:#bbbbbb;font-size:23px">Database</div>
<svg style="left:2529px;top:279px" width="22" height="23" viewBox="0 0 22 23"><ellipse cx="11" cy="5" rx="4" ry="4" fill="#afb1b3"/><ellipse cx="11" cy="15" rx="5" ry="7" fill="#afb1b3"/><path d="M1 6L7 10M21 6L15 10M0 14H22M1 22L7 18M21 22L15 18" stroke="#afb1b3" stroke-width="2"/></svg>
<div class="t" style="left:2550px;top:309px;transform:rotate(90deg) scaleX(0.87);transform-origin:0 0;color:#bbbbbb;font-size:23px">Ant</div>
<div class="t" style="left:2527px;top:373px;color:#afb1b3;font-weight:bold;font-style:italic;font-size:30px;font-family:'Liberation Sans'">m</div>
<div class="t" style="left:2550px;top:406px;transform:rotate(90deg) scaleX(0.87);transform-origin:0 0;color:#bbbbbb;font-size:23px">Maven</div>

<!-- ===== DEBUG PANEL ===== -->
<div class="a" style="left:41px;top:914px;width:2478px;height:551px;background:#3c3f41"></div>


<div class="a" style="left:41px;top:911px;width:537px;height:2px;background:#2b2b2b"></div>
<!-- debug header -->
<div class="t" style="left:54px;top:928.8px;color:#bbbbbb;font-size:23px">Debug:</div>
<svg style="left:167px;top:926px" width="27" height="24" viewBox="0 0 27 24"><path d="M5 5V1H26V18H22" fill="none" stroke="#6e7275" stroke-width="1.8"/><rect x="1" y="5" width="21" height="18" fill="none" stroke="#8c979e" stroke-width="2"/><rect x="3.5" y="10" width="16" height="10" fill="#3d6e8c"/></svg>
<div class="t" style="left:201px;top:929.7px;color:#bbbbbb;font-size:22px">TestCC3</div>
<svg style="left:300px;top:932px" width="15" height="15"><path d="M1 1L14 14M14 1L1 14" stroke="#6e7275" stroke-width="1.8"/></svg>
<div class="a" style="left:143px;top:960px;width:194px;height:4px;background:#747a80"></div>
<div class="a" style="left:41px;top:963px;width:2478px;height:1px;background:#323232"></div>
<svg style="left:2429px;top:926px" width="25" height="25" viewBox="0 0 24 24"><path fill="#afb1b3" d="M19.4 13a7.5 7.5 0 0 0 0-2l2.1-1.6-2-3.5-2.5 1a7.6 7.6 0 0 0-1.7-1L14.9 3h-4l-.4 2.6a7.6 7.6 0 0 0-1.7 1l-2.5-1-2 3.5L6.4 11a7.5 7.5 0 0 0 0 2l-2.1 1.6 2 3.5 2.5-1a7.6 7.6 0 0 0 1.7 1l.4 2.6h4l.4-2.6a7.6 7.6 0 0 0 1.7-1l2.5 1 2-3.5zM12.9 15.5a3.5 3.5 0 1 1 0-7 3.5 3.5 0 0 1 0 7z"/></svg>
<div class="a" style="left:2481px;top:937px;width:23px;height:3px;background:#afb1b3"></div>
<svg style="left:2480px;top:978px" width="28" height="30" viewBox="0 0 28 30"><rect x="0" y="0" width="24" height="9" fill="#afb1b3"/><rect x="0" y="11" width="11" height="10" fill="#afb1b3"/><rect x="13" y="11" width="11" height="10" fill="#afb1b3"/><path d="M19 24H28L23.5 29Z" fill="#afb1b3"/></svg>

<!-- left debug column -->
<div class="a" style="left:96px;top:964px;width:1px;height:501px;background:#323232"></div>
<svg style="left:57px;top:980px" width="24" height="27" viewBox="0 0 24 27"><path d="M7 1L10 5M17 1L14 5" stroke="#4aa45a" stroke-width="2.2"/><ellipse cx="12" cy="16" rx="7.5" ry="9.5" fill="#4aa45a"/><path d="M0 10H4M20 10H24M0 16H4M20 16H24M0 22H4M20 22H24" stroke="#4aa45a" stroke-width="2.4"/><rect x="7" y="12" width="10" height="2.2" fill="#3c3f41"/><rect x="7" y="18" width="10" height="2.2" fill="#3c3f41"/></svg>
<div class="a" style="left:51px;top:1024px;width:34px;height:2px;background:#515151"></div>
<svg style="left:59px;top:1048px" width="23" height="21"><rect x="0" y="0" width="5" height="21" fill="#5c5e60"/><path d="M9 0L23 10.5L9 21Z" fill="#5c5e60"/></svg>
<svg style="left:61px;top:1099px" width="17" height="20"><rect x="0" y="0" width="5.5" height="20" fill="#5c5e60"/><rect x="11" y="0" width="5.5" height="20" fill="#5c5e60"/></svg>
<div class="a" style="left:59px;top:1151px;width:21px;height:21px;background:#5c5e60"></div>
<div class="a" style="left:51px;top:1192px;width:34px;height:2px;background:#515151"></div>
<svg style="left:57px;top:1213px" width="26" height="26" viewBox="0 0 26 26"><circle cx="17" cy="9" r="8" fill="#c75450"/><circle cx="10" cy="16" r="9" fill="#3c3f41"/><circle cx="10" cy="16" r="8" fill="#c75450"/></svg>
<svg style="left:57px;top:1265px" width="26" height="26" viewBox="0 0 26 26"><circle cx="13" cy="13" r="10" fill="#c75450"/><path d="M2 24L24 2" stroke="#3c3f41" stroke-width="4.5"/><path d="M2 24L24 2" stroke="#afb1b3" stroke-width="2.2"/></svg>
<div class="a" style="left:51px;top:1309px;width:34px;height:2px;background:#515151"></div>
<svg style="left:56px;top:1333px" width="27" height="22" viewBox="0 0 27 22"><path d="M0 4H7L9 0H18L20 4H27V22H0Z" fill="#5c5e60"/><circle cx="13.5" cy="12.5" r="5.5" fill="#3c3f41"/><circle cx="13.5" cy="12.5" r="3" fill="#5c5e60"/></svg>
<div class="a" style="left:51px;top:1376px;width:34px;height:2px;background:#515151"></div>
<svg style="left:56px;top:1398px" width="30" height="30" viewBox="0 0 30 30"><g transform="scale(1.05)"><path fill="#afb1b3" d="M19.4 13a7.5 7.5 0 0 0 0-2l2.1-1.6-2-3.5-2.5 1a7.6 7.6 0 0 0-1.7-1L14.9 3h-4l-.4 2.6a7.6 7.6 0 0 0-1.7 1l-2.5-1-2 3.5L6.4 11a7.5 7.5 0 0 0 0 2l-2.1 1.6 2 3.5 2.5-1a7.6 7.6 0 0 0 1.7 1l.4 2.6h4l.4-2.6a7.6 7.6 0 0 0 1.7-1l2.5 1 2-3.5zM12.9 15.5a3.5 3.5 0 1 1 0-7 3.5 3.5 0 0 1 0 7z"/></g><path d="M20 21H29L24.5 26Z" fill="#afb1b3"/></svg>
<svg style="left:63px;top:1442px" width="16" height="12"><path d="M1 1L6 6L1 11M9 1L14 6L9 11" stroke="#afb1b3" stroke-width="1.5" fill="none"/></svg>

<!-- debugger/console tabs row -->
<div class="t" style="left:123px;top:980.5px;color:#bbbbbb;font-size:21.3px">Debugger</div>
<div class="a" style="left:97px;top:1012px;width:144px;height:5px;background:#747a80"></div>
<svg style="left:266px;top:980px" width="29" height="27" viewBox="0 0 29 27"><rect x="0" y="0" width="23" height="19" fill="#afb1b3"/><path d="M5 5L10 9.5L5 14" stroke="#3c3f41" stroke-width="2" fill="none"/><circle cx="20" cy="19" r="7.5" fill="#eda200"/><path d="M20 14V23M16.5 19.5L20 23L23.5 19.5" stroke="#3c3f41" stroke-width="1.8" fill="none"/></svg>
<div class="t" style="left:299px;top:980.5px;color:#bbbbbb;font-size:21.3px">Console</div>
<svg style="left:403px;top:981px" width="23" height="21"><path d="M0 2H23M0 10.5H23M0 19H23" stroke="#5c5e60" stroke-width="3.5"/></svg>
<div class="a" style="left:445px;top:972px;width:2px;height:34px;background:#515151"></div>
<svg style="left:467px;top:978px" width="25" height="24" viewBox="0 0 25 24"><path d="M0 22H25" stroke="#5c5e60" stroke-width="3.5"/><path d="M2 15L10 7L16 13" stroke="#5c5e60" stroke-width="3" fill="none"/><path d="M13 6H23V16Z" fill="#5c5e60"/></svg>
<svg style="left:519px;top:978px" width="24" height="24" viewBox="0 0 24 24"><path d="M0 22H24" stroke="#5c5e60" stroke-width="3.5"/><path d="M12 0V12" stroke="#5c5e60" stroke-width="3"/><path d="M4 9H20L12 17Z" fill="#5c5e60"/></svg>
<svg style="left:570px;top:978px" width="24" height="24" viewBox="0 0 24 24"><path d="M0 22H24" stroke="#5c5e60" stroke-width="3.5"/><path d="M12 0V12" stroke="#5c5e60" stroke-width="3"/><path d="M4 9H20L12 17Z" fill="#5c5e60"/></svg>
<svg style="left:621px;top:978px" width="24" height="24" viewBox="0 0 24 24"><path d="M0 22H24" stroke="#5c5e60" stroke-width="3.5"/><path d="M12 6V17" stroke="#5c5e60" stroke-width="3"/><path d="M4 9H20L12 1Z" fill="#5c5e60"/></svg>
<svg style="left:672px;top:978px" width="27" height="26" viewBox="0 0 27 26"><path d="M1 1L12 12" stroke="#5c5e60" stroke-width="3"/><path d="M4 14H14V4Z" fill="#5c5e60"/><path d="M16 12H24M16 25H24M20 12V25" stroke="#5c5e60" stroke-width="1.8"/></svg>
<div class="a" style="left:715px;top:972px;width:2px;height:34px;background:#515151"></div>
<svg style="left:738px;top:978px" width="24" height="24" viewBox="0 0 24 24"><rect x="0" y="0" width="24" height="24" fill="#5c5e60"/><rect x="2.5" y="2.5" width="19" height="5" fill="#3c3f41"/><g fill="#3c3f41"><rect x="4" y="10" width="4" height="3"/><rect x="10" y="10" width="4" height="3"/><rect x="16" y="10" width="4" height="3"/><rect x="4" y="15" width="4" height="3"/><rect x="10" y="15" width="4" height="3"/><rect x="16" y="15" width="4" height="3"/></g></svg>
<svg style="left:789px;top:978px" width="24" height="24" viewBox="0 0 24 24"><path d="M0 3H9M14 3H24M0 12H5M13 12H24M0 21H9M14 21H24M8 22L16 2" stroke="#5c5e60" stroke-width="3"/></svg>
<div class="a" style="left:97px;top:1016px;width:2422px;height:1px;background:#323232"></div>

<!-- frames -->
<div class="t" style="left:123px;top:1032.2px;color:#bbbbbb;font-size:20.5px">Frames</div>
<div class="a" style="left:97px;top:1066px;width:750px;height:1px;background:#323232"></div>
<div class="a" style="left:846px;top:1016px;width:1px;height:449px;background:#323232"></div>
<div class="a" style="left:103px;top:1073px;width:576px;height:46px;border:2px solid #5e6164;border-radius:4px"></div>
<svg style="left:648px;top:1092px" width="17" height="10"><path d="M0 0H17L8.5 10Z" fill="#afb1b3"/></svg>
<svg style="left:704px;top:1083px" width="20" height="25" viewBox="0 0 20 25"><path d="M10 3V25M2 11L10 2L18 11" stroke="#5c5e60" stroke-width="3" fill="none"/></svg>
<svg style="left:755px;top:1083px" width="20" height="25" viewBox="0 0 20 25"><path d="M10 0V22M2 14L10 23L18 14" stroke="#5c5e60" stroke-width="3" fill="none"/></svg>
<svg style="left:804px;top:1084px" width="24" height="24" viewBox="0 0 24 24"><path d="M0 0H24L15 11V24H9V11Z" fill="#afb1b3"/></svg>
<div class="a" style="left:97px;top:1125px;width:750px;height:1px;background:#323232"></div>
<div class="t" style="left:345px;top:1234.8px;color:#7f8286;font-size:23px">Frames are not available</div>

<!-- variables -->
<div class="t" style="left:871px;top:1032.0px;color:#bbbbbb;font-size:20.5px">Variables</div>
<div class="a" style="left:847px;top:1066px;width:1672px;height:1px;background:#323232"></div>
<div class="a" style="left:893px;top:1067px;width:1px;height:398px;background:#323232"></div>
<svg style="left:860px;top:1084px" width="21" height="21"><path d="M10.5 0V21M0 10.5H21" stroke="#afb1b3" stroke-width="3.5"/></svg>
<div class="a" style="left:860px;top:1144px;width:21px;height:3px;background:#5c5e60"></div>
<svg style="left:860px;top:1190px" width="21" height="11"><path d="M0 11L10.5 0L21 11Z" fill="#5c5e60"/></svg>
<svg style="left:860px;top:1241px" width="21" height="11"><path d="M0 0L10.5 11L21 0Z" fill="#5c5e60"/></svg>
<svg style="left:859px;top:1285px" width="24" height="24" viewBox="0 0 24 24"><path d="M1 1H15V5H5V17H1Z" fill="#5c5e60"/><rect x="7" y="7" width="16" height="16" fill="#5c5e60"/><path d="M10 12H20M10 16H20M10 20H20" stroke="#3c3f41" stroke-width="1.5"/></svg>
<div class="a" style="left:849px;top:1328px;width:42px;height:41px;background:#595d60;border-radius:4px"></div>
<svg style="left:855px;top:1341px" width="30" height="16" viewBox="0 0 30 16"><circle cx="7" cy="9" r="5.5" fill="none" stroke="#afb1b3" stroke-width="2.5"/><circle cx="23" cy="9" r="5.5" fill="none" stroke="#afb1b3" stroke-width="2.5"/><path d="M2 3L6 1H24L28 3" stroke="#afb1b3" stroke-width="2" fill="none"/></svg>
<svg style="left:933px;top:1081px" width="30" height="16" viewBox="0 0 30 16"><circle cx="7" cy="9" r="5.5" fill="none" stroke="#afb1b3" stroke-width="2.5"/><circle cx="23" cy="9" r="5.5" fill="none" stroke="#afb1b3" stroke-width="2.5"/><path d="M2 3L6 1H24L28 3" stroke="#afb1b3" stroke-width="2" fill="none"/></svg>
<div class="a" style="left:969px;top:1075px;width:340px;height:30px;overflow:hidden"><div class="t" style="left:969px;top:1079.4px;color:#f0706c;font-size:22px;left:0;top:4.4px">((ChainedTransformer)((Transformer[])iTransformers</div></div>
<div class="t" style="left:1789px;top:1079.4px;color:#f0706c;font-size:22px">ers</div>

<!-- left strip bottom: structure, favorites -->
<div class="t" style="left:11px;top:1234px;transform:rotate(-90deg) scaleX(0.87);transform-origin:0 0;color:#bbbbbb;font-size:23px"><u>7</u>: Structure</div>
<svg style="left:12px;top:1243px" width="21" height="19" viewBox="0 0 21 19"><rect x="10" y="0" width="9" height="8" fill="#bbbbbb"/><rect x="0" y="11" width="9" height="8" fill="#bbbbbb"/><rect x="10" y="11" width="9" height="8" fill="#bbbbbb"/></svg>
<div class="t" style="left:11px;top:1413px;transform:rotate(-90deg) scaleX(0.87);transform-origin:0 0;color:#bbbbbb;font-size:23px"><u>2</u>: Favorites</div>
<svg style="left:9px;top:1421px" width="24" height="24" viewBox="0 0 24 24"><path d="M12 0L15 8.5H24L17 14L19.5 23L12 17.5L4.5 23L7 14L0 8.5H9Z" fill="#bbbbbb"/></svg>

<!-- ===== BOTTOM TOOLBAR ===== -->
<div class="a" style="left:0;top:1465px;width:2560px;height:43px;background:#3c3f41;border-top:1px solid #323232"></div>

<!-- ===== STATUS BAR ===== -->

<div class="a" style="left:0;top:1508px;width:2560px;height:32px;background:#3c3f41;border-top:1px solid #4a4a4a"></div>


<div class="a" style="left:166px;top:1466px;width:155px;height:42px;background:#2d2f30"></div>
<svg style="left:60px;top:1479px" width="17" height="19"><path d="M0 0L17 9.5L0 19Z" fill="#afb1b3"/></svg>
<div class="t" style="left:88px;top:1479.3px;color:#bbbbbb;font-size:21.5px"><u>4</u>: Run</div>
<svg style="left:187px;top:1477px" width="21" height="23" viewBox="0 0 24 27"><path d="M7 1L10 5M17 1L14 5" stroke="#afb1b3" stroke-width="2.2"/><ellipse cx="12" cy="16" rx="7.5" ry="9.5" fill="#afb1b3"/><path d="M0 10H4M20 10H24M0 16H4M20 16H24M0 22H4M20 22H24" stroke="#afb1b3" stroke-width="2.4"/><rect x="7" y="12" width="10" height="2.2" fill="#2d2f30"/><rect x="7" y="18" width="10" height="2.2" fill="#2d2f30"/></svg>
<div class="t" style="left:215px;top:1479.3px;color:#dddddd;font-size:21.5px"><u>5</u>: Debug</div>
<svg style="left:343px;top:1479px" width="20" height="18" viewBox="0 0 20 18"><path d="M0 2H4M0 9H4M0 16H4M7 2H20M7 9H20M7 16H20" stroke="#afb1b3" stroke-width="3"/></svg>
<div class="t" style="left:371px;top:1479.3px;color:#bbbbbb;font-size:21.5px"><u>6</u>: TODO</div>
<svg style="left:491px;top:1478px" width="22" height="19" viewBox="0 0 22 19"><rect x="0" y="0" width="22" height="19" fill="#afb1b3"/><path d="M4 5L9 9L4 13" stroke="#3c3f41" stroke-width="2" fill="none"/><path d="M11 14H17" stroke="#3c3f41" stroke-width="2"/></svg>
<div class="t" style="left:521px;top:1479.3px;color:#bbbbbb;font-size:21.5px">Terminal</div>
<svg style="left:637px;top:1477px" width="24" height="22" viewBox="0 0 24 22"><path d="M1 7L9 1L12 3.5L10 6L23 19L20 22L7 9L5 11Z" fill="#afb1b3"/></svg>
<div class="t" style="left:668px;top:1479.3px;color:#bbbbbb;font-size:21.5px">Build</div>
<svg style="left:2375px;top:1477px" width="22" height="22" viewBox="0 0 22 22"><path d="M11 1.5A9.5 9.5 0 1 0 20.5 11V20.5H11" fill="none" stroke="#afb1b3" stroke-width="2.5"/></svg>
<div class="t" style="left:2403px;top:1479.3px;color:#bbbbbb;font-size:21.5px">Event Log</div>

<svg style="left:12px;top:1515px" width="22" height="22" viewBox="0 0 22 22"><path d="M5 1H21V17" fill="none" stroke="#8a8d90" stroke-width="1.5"/><rect x="1" y="5" width="16" height="16" fill="none" stroke="#8a8d90" stroke-width="1.5"/></svg>
<div class="t" style="left:51px;top:1514.7px;color:#bbbbbb;font-size:24px">All files are up-to-date (moments ago)</div>
<div class="t" style="left:2302px;top:1516.4px;color:#bbbbbb;font-size:22px">408:1</div>
<div class="t" style="left:2388px;top:1516.4px;color:#7f8286;font-size:22px">LF</div>
<div class="t" style="left:2432px;top:1516.4px;color:#7f8286;font-size:22px">UTF-8</div>
<svg style="left:2518px;top:1512px" width="26" height="26" viewBox="0 0 26 26"><path d="M6 10V6A7 5 0 0 1 20 6V10Z" fill="#afb1b3"/><rect x="3" y="10" width="20" height="3" fill="#afb1b3"/><circle cx="13" cy="18" r="6" fill="none" stroke="#afb1b3" stroke-width="2"/><path d="M3 26H23" stroke="#afb1b3" stroke-width="2"/></svg>

<!-- ===== CALCULATOR ===== -->
<div class="a" style="left:1309px;top:312px;width:480px;height:796px;background:linear-gradient(180deg,#c8c8c8 0%,#cbcbcb 40%,#cacaca 100%);box-shadow:0 0 0 1px rgba(0,0,0,.25)"></div>
<svg style="left:1327px;top:327px" width="56" height="19" viewBox="0 0 56 19" stroke="#222" stroke-width="1.3" fill="none">
<path d="M2 1.5L4 3.5M1 7H4V16L6 14M7 7H17M12 1V18"/>
<path d="M20 3L23 1M20 3.5H25M27 3L30 1M27 3.5H33M22 6H32V12H22ZM22 8H32M22 10H32M19 14.5H35M25 12V18L23 18.5M30 12V18.5"/>
<path d="M38 1.5H43V5.5H38ZM48 1.5H53V5.5H48ZM37 8H54M45.5 6V8L39 12M45.5 8L53 12M50 7L52 6M38 12.5H43V17.5H38ZM48 12.5H53V17.5H48Z"/>
</svg>
<div class="a" style="left:1607px;top:336px;width:16px;height:1.2px;background:#1e1e1e"></div>
<div class="a" style="left:1677px;top:328px;width:16px;height:16px;border:1.2px solid #1e1e1e"></div>
<svg style="left:1746px;top:328px" width="16" height="16"><path d="M0.5 0.5L15.5 15.5M15.5 0.5L0.5 15.5" stroke="#1e1e1e" stroke-width="1.2"/></svg>
<svg style="left:1327px;top:383px" width="24" height="13"><path d="M0 1H24M0 6.5H24M0 12H24" stroke="#1e1e1e" stroke-width="1.3"/></svg>
<svg style="left:1381px;top:375px" width="60" height="29" viewBox="0 0 60 29" stroke="#111" stroke-width="3.6" fill="none" stroke-linecap="square">
<path d="M1 8H11M6 1V28M6 10L1 20M6 10L11 16M15 4H27M13 11H29M21 11V26L18 27M16 16L13 23M26 16L29 23"/>
<path d="M33 3L36 6M32 14L35 11M33 27L37 19M43 1L40 8M41 6V28M46 2L48 5M41 7H58M47 7V27M41 14H56M41 20H56M41 26H58"/>
</svg>
<svg style="left:1475px;top:380px" width="23" height="20" viewBox="0 0 23 20" stroke="#1e1e1e" stroke-width="1.4" fill="none"><path d="M2 1H22V14H14M7 1V7H14"/><path d="M2 19L9 12M3 12H9V18"/></svg>
<svg style="left:1749px;top:378px" width="24" height="24" viewBox="0 0 24 24" stroke="#1e1e1e" stroke-width="1.6" fill="none"><path d="M3.5 9A9.5 9.5 0 1 1 3 15"/><path d="M1 5L3.5 9.5L8 8"/><path d="M12 6V12L16 16"/></svg>
<div class="t" style="left:1731px;top:469px;color:#000;font-size:70px;font-weight:bold">0</div>
<div class="t" style="left:1314px;width:80px;text-align:center;top:584px;color:#9a9a9a;font-size:18px;font-weight:bold">MC</div>
<div class="t" style="left:1392px;width:80px;text-align:center;top:584px;color:#9a9a9a;font-size:18px;font-weight:bold">MR</div>
<div class="t" style="left:1469px;width:80px;text-align:center;top:584px;color:#111;font-size:18px;font-weight:bold">M+</div>
<div class="t" style="left:1548px;width:80px;text-align:center;top:584px;color:#111;font-size:18px;font-weight:bold">M-</div>
<div class="t" style="left:1627px;width:80px;text-align:center;top:584px;color:#111;font-size:18px;font-weight:bold">MS</div>
<div class="t" style="left:1705px;width:80px;text-align:center;top:584px;color:#9a9a9a;font-size:18px;font-weight:bold">M</div>
<svg style="left:1754px;top:584px" width="7" height="5"><path d="M0 0H7L3.5 5Z" fill="#9a9a9a"/></svg>
<div class="a" style="left:1316px;top:619px;width:115px;height:80px;background:#dcdcdc"></div>
<div class="t" style="left:1316px;width:115px;text-align:center;top:650px;color:#000;font-size:21px">%</div>
<div class="a" style="left:1433px;top:619px;width:116px;height:80px;background:#dcdcdc"></div>
<div class="t" style="left:1433px;width:116px;text-align:center;top:650px;color:#000;font-size:21px">CE</div>
<div class="a" style="left:1551px;top:619px;width:116px;height:80px;background:#dcdcdc"></div>
<div class="t" style="left:1551px;width:116px;text-align:center;top:650px;color:#000;font-size:21px">C</div>
<div class="a" style="left:1669px;top:619px;width:115px;height:80px;background:#dcdcdc"></div>
<svg style="left:1716px;top:650px" width="23" height="17" viewBox="0 0 23 17" stroke="#000" stroke-width="1.5" fill="none"><path d="M7 1H22V16H7L1 8.5Z"/><path d="M11 5L17 12M17 5L11 12"/></svg>
<div class="a" style="left:1316px;top:701px;width:115px;height:79px;background:#dcdcdc"></div>
<div class="t" style="left:1360px;top:728px;color:#000;font-size:13px;font-family:'Liberation Serif'">1</div><svg style="left:1366px;top:728px" width="8" height="22"><path d="M7 0L1 22" stroke="#000" stroke-width="1.3"/></svg><div class="t" style="left:1372px;top:730px;color:#000;font-size:25px;font-style:italic;font-family:'Liberation Serif'">x</div>
<div class="a" style="left:1433px;top:701px;width:116px;height:79px;background:#dcdcdc"></div>
<div class="t" style="left:1479px;top:730px;color:#000;font-size:25px;font-style:italic;font-family:'Liberation Serif'">x</div><div class="t" style="left:1494px;top:726px;color:#000;font-size:14px;font-family:'Liberation Sans'">2</div>
<div class="a" style="left:1551px;top:701px;width:116px;height:79px;background:#dcdcdc"></div>
<div class="t" style="left:1597px;top:726px;color:#000;font-size:12px">2</div><svg style="left:1598px;top:730px" width="26" height="22" viewBox="0 0 26 22" stroke="#000" stroke-width="1.3" fill="none"><path d="M0 13L3 11L7 21L11 1H26"/></svg><div class="t" style="left:1609px;top:730px;color:#000;font-size:25px;font-style:italic;font-family:'Liberation Serif'">x</div>
<div class="a" style="left:1669px;top:701px;width:115px;height:79px;background:#dcdcdc"></div>
<svg style="left:1716px;top:730px" width="20" height="20"><path d="M0 10H20" stroke="#000" stroke-width="1.3"/><circle cx="10" cy="3" r="1.6" fill="#000"/><circle cx="10" cy="17" r="1.6" fill="#000"/></svg>
<div class="a" style="left:1316px;top:782px;width:115px;height:79px;background:#f3f3f3"></div>
<div class="t" style="left:1316px;width:115px;text-align:center;top:809px;color:#000;font-size:29px;font-weight:bold">7</div>
<div class="a" style="left:1433px;top:782px;width:116px;height:79px;background:#f3f3f3"></div>
<div class="t" style="left:1433px;width:116px;text-align:center;top:809px;color:#000;font-size:29px;font-weight:bold">8</div>
<div class="a" style="left:1551px;top:782px;width:116px;height:79px;background:#f3f3f3"></div>
<div class="t" style="left:1551px;width:116px;text-align:center;top:809px;color:#000;font-size:29px;font-weight:bold">9</div>
<div class="a" style="left:1669px;top:782px;width:115px;height:79px;background:#dcdcdc"></div>
<svg style="left:1718px;top:812px" width="17" height="17"><path d="M0.5 0.5L16.5 16.5M16.5 0.5L0.5 16.5" stroke="#000" stroke-width="1.3"/></svg>
<div class="a" style="left:1316px;top:863px;width:115px;height:79px;background:#f3f3f3"></div>
<div class="t" style="left:1316px;width:115px;text-align:center;top:891px;color:#000;font-size:29px;font-weight:bold">4</div>
<div class="a" style="left:1433px;top:863px;width:116px;height:79px;background:#f3f3f3"></div>
<div class="t" style="left:1433px;width:116px;text-align:center;top:891px;color:#000;font-size:29px;font-weight:bold">5</div>
<div class="a" style="left:1551px;top:863px;width:116px;height:79px;background:#f3f3f3"></div>
<div class="t" style="left:1551px;width:116px;text-align:center;top:891px;color:#000;font-size:29px;font-weight:bold">6</div>
<div class="a" style="left:1669px;top:863px;width:115px;height:79px;background:#dcdcdc"></div>
<div class="a" style="left:1716px;top:902px;width:20px;height:1.4px;background:#000"></div>
<div class="a" style="left:1316px;top:944px;width:115px;height:79px;background:#f3f3f3"></div>
<div class="t" style="left:1316px;width:115px;text-align:center;top:971px;color:#000;font-size:29px;font-weight:bold">1</div>
<div class="a" style="left:1433px;top:944px;width:116px;height:79px;background:#f3f3f3"></div>
<div class="t" style="left:1433px;width:116px;text-align:center;top:971px;color:#000;font-size:29px;font-weight:bold">2</div>
<div class="a" style="left:1551px;top:944px;width:116px;height:79px;background:#f3f3f3"></div>
<div class="t" style="left:1551px;width:116px;text-align:center;top:971px;color:#000;font-size:29px;font-weight:bold">3</div>
<div class="a" style="left:1669px;top:944px;width:115px;height:79px;background:#dcdcdc"></div>
<svg style="left:1716px;top:972px" width="20" height="20"><path d="M0 10H20M10 0V20" stroke="#000" stroke-width="1.3"/></svg>
<div class="a" style="left:1316px;top:1025px;width:115px;height:79px;background:#f3f3f3"></div>
<div class="t" style="left:1358px;top:1052px;color:#000;font-size:14px">+</div><svg style="left:1366px;top:1052px" width="8" height="22"><path d="M7 0L1 22" stroke="#000" stroke-width="1.3"/></svg><div class="a" style="left:1374px;top:1072px;width:11px;height:1.3px;background:#000"></div>
<div class="a" style="left:1433px;top:1025px;width:116px;height:79px;background:#f3f3f3"></div>
<div class="t" style="left:1433px;width:116px;text-align:center;top:1053px;color:#000;font-size:29px;font-weight:bold">0</div>
<div class="a" style="left:1551px;top:1025px;width:116px;height:79px;background:#f3f3f3"></div>
<div class="a" style="left:1607px;top:1070px;width:4px;height:4px;background:#000;border-radius:50%"></div>
<div class="a" style="left:1669px;top:1025px;width:115px;height:79px;background:#78a7d2"></div>
<svg style="left:1716px;top:1058px" width="20" height="10"><path d="M0 1.5H20M0 8.5H20" stroke="#000" stroke-width="1.3"/></svg>


<div class="t" style="left:839px;top:1418.5px;font-family:'Liberation Serif';font-size:61px;letter-spacing:14.3px;color:transparent;-webkit-text-stroke:1.1px #d0d0d0">AaronLuo's Blog from byAaronluo.github.io</div>
</body></html>
